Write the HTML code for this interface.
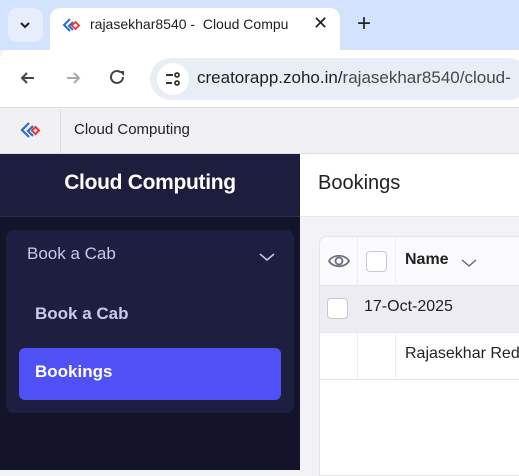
<!DOCTYPE html>
<html><head><meta charset="utf-8"><style>
*{box-sizing:border-box;margin:0;padding:0}
body{width:519px;height:470px;overflow:hidden;font-family:"Liberation Sans",sans-serif;background:#f3f3f7;position:relative}
.abs{position:absolute}
</style></head><body>
<div class="abs" style="left:0;top:0;width:519px;height:50px;background:#d3e3fd"></div>
<div class="abs" style="left:8px;top:8px;width:35px;height:34px;border-radius:9px;background:#e6eefc"></div>
<svg class="abs" style="left:19px;top:20px" width="12" height="10"><path d="M2 3l4 4 4-4" stroke="#1f1f1f" stroke-width="2" fill="none"/></svg>
<div class="abs" style="left:50px;top:8px;width:290px;height:44px;background:#fff;border-radius:10px 10px 0 0"></div>
<svg class="abs" style="left:61px;top:16px" width="20" height="20"><path d="M9 3L3 9l6 6" stroke="#2a6dd8" stroke-width="2" fill="none"/><path d="M12 6l-4 4 4 4" stroke="#2a6dd8" stroke-width="2" fill="none"/><rect x="12" y="7" width="5" height="5" transform="rotate(45 14.5 9.5)" stroke="#e33" stroke-width="1.8" fill="none"/></svg>
<div class="abs" style="left:90px;top:16px;font-size:14px;color:#1f1f1f;white-space:nowrap;width:212px;overflow:hidden">rajasekhar8540 -&nbsp; Cloud Compu</div>
<div class="abs" style="left:313px;top:13px;font-size:18px;color:#1f1f1f">✕</div>
<div class="abs" style="left:357px;top:10px;font-size:24px;color:#1f1f1f;font-weight:300">+</div>
<div class="abs" style="left:0;top:50px;width:519px;height:57px;background:#fff;border-radius:10px 0 0 0"></div>
<svg class="abs" style="left:18px;top:68px" width="20" height="20"><path d="M16 10H4M9 5l-5 5 5 5" stroke="#444" stroke-width="2" fill="none"/></svg>
<svg class="abs" style="left:63px;top:68px" width="20" height="20"><path d="M4 10h12M11 5l5 5-5 5" stroke="#aaa" stroke-width="2" fill="none"/></svg>
<svg class="abs" style="left:108px;top:68px" width="20" height="20"><path d="M15 9a6 6 0 1 1-2-4.5" stroke="#444" stroke-width="2" fill="none"/><path d="M11 3h5v5z" fill="#444"/></svg>
<div class="abs" style="left:150px;top:58px;width:380px;height:42px;background:#e9eef6;border-radius:21px"></div>
<div class="abs" style="left:157px;top:63px;width:32px;height:32px;background:#fff;border-radius:16px"></div>
<svg class="abs" style="left:163px;top:69px" width="20" height="20"><path d="M3 6h7M3 14h6" stroke="#333" stroke-width="2"/><circle cx="14" cy="6" r="2" fill="none" stroke="#333" stroke-width="1.8"/><circle cx="14" cy="14" r="2" fill="none" stroke="#333" stroke-width="1.8"/><path d="M3 6h1" stroke="#333" stroke-width="2"/></svg>
<div class="abs" style="left:197px;top:68px;font-size:17px;color:#1f1f1f;white-space:nowrap">creatorapp.zoho.in/<span style="color:#474747">rajasekhar8540/cloud-</span></div>
<div class="abs" style="left:0;top:107px;width:519px;height:47px;background:#f1f1f5;border-top:1px solid #ddd;border-bottom:1px solid #ddd"></div>
<div class="abs" style="left:60px;top:109px;width:1px;height:44px;background:#ddd"></div>
<svg class="abs" style="left:19px;top:120px" width="24" height="22"><path d="M10 3L3 10l7 7" stroke="#2a6dd8" stroke-width="2.2" fill="none"/><path d="M14 6l-5 5 5 5" stroke="#2a6dd8" stroke-width="2.2" fill="none"/><rect x="14" y="8" width="5" height="5" transform="rotate(45 16.5 10.5)" stroke="#e33" stroke-width="2" fill="none"/></svg>
<div class="abs" style="left:74px;top:121px;font-size:15px;color:#222">Cloud Computing</div>
<div class="abs" style="left:0;top:154px;width:300px;height:316px;background:#131329"></div>
<div class="abs" style="left:0;top:154px;width:300px;height:63px;background:#1d1d3e;border-bottom:1px solid #2e2e50"></div>
<div class="abs" style="left:0;top:171px;width:300px;text-align:center;font-size:21px;font-weight:bold;color:#fff;letter-spacing:-0.3px">Cloud Computing</div>
<div class="abs" style="left:6px;top:230px;width:288px;height:183px;background:#1e1e40;border-radius:8px"></div>
<div class="abs" style="left:27px;top:244px;font-size:17px;color:#c9cbe6">Book a Cab</div>
<svg class="abs" style="left:258px;top:251px" width="18" height="12"><path d="M2 3l7 6 7-6" stroke="#c9cbe6" stroke-width="1.5" fill="none"/></svg>
<div class="abs" style="left:35px;top:304px;font-size:17px;font-weight:bold;color:#c9cbe6">Book a Cab</div>
<div class="abs" style="left:19px;top:348px;width:262px;height:52px;background:#5050f7;border-radius:6px"></div>
<div class="abs" style="left:35px;top:362px;font-size:17px;font-weight:bold;color:#fff">Bookings</div>
<div class="abs" style="left:300px;top:154px;width:219px;height:63px;background:#fff;border-bottom:1px solid #e4e4ea"></div>
<div class="abs" style="left:318px;top:172px;font-size:20px;color:#222">Bookings</div>
<div class="abs" style="left:319px;top:236px;width:210px;height:240px;background:#fff;border:1px solid #e4e4ea;border-radius:8px 0 0 0;overflow:hidden">
 <div class="abs" style="left:0;top:0;width:210px;height:49px;background:#fbfbfd;border-bottom:1px solid #e4e4ea"></div>
 <div class="abs" style="left:37px;top:0;width:1px;height:49px;background:#eee"></div>
 <div class="abs" style="left:75px;top:0;width:1px;height:49px;background:#eee"></div>
 <svg class="abs" style="left:7px;top:14px" width="24" height="20"><path d="M2 10C6 3 18 3 22 10C18 17 6 17 2 10z" stroke="#6b6f80" stroke-width="1.8" fill="none"/><circle cx="12" cy="10" r="3.5" stroke="#6b6f80" stroke-width="1.8" fill="none"/></svg>
 <div class="abs" style="left:46px;top:14px;width:21px;height:21px;border:1px solid #c8c8d4;border-radius:4px;background:#fff"></div>
 <div class="abs" style="left:85px;top:14px;font-size:16px;font-weight:bold;color:#222">Name</div>
 <svg class="abs" style="left:141px;top:21px" width="16" height="10"><path d="M1 2l7 6 7-6" stroke="#666" stroke-width="1.4" fill="none"/></svg>
 <div class="abs" style="left:0;top:49px;width:210px;height:47px;background:#ececf2;border-bottom:1px solid #e4e4ea"></div>
 <div class="abs" style="left:7px;top:61px;width:21px;height:21px;border:1px solid #c8c8d4;border-radius:4px;background:#fff"></div>
 <div class="abs" style="left:44px;top:61px;font-size:16px;color:#222">17-Oct-2025</div>
 <div class="abs" style="left:37px;top:96px;width:1px;height:47px;background:#eee"></div>
 <div class="abs" style="left:75px;top:96px;width:1px;height:47px;background:#eee"></div>
 <div class="abs" style="left:85px;top:108px;font-size:16px;color:#222;white-space:nowrap">Rajasekhar Reddy</div>
 <div class="abs" style="left:0;top:142px;width:210px;height:1px;background:#e4e4ea"></div>
</div>
</body></html>
